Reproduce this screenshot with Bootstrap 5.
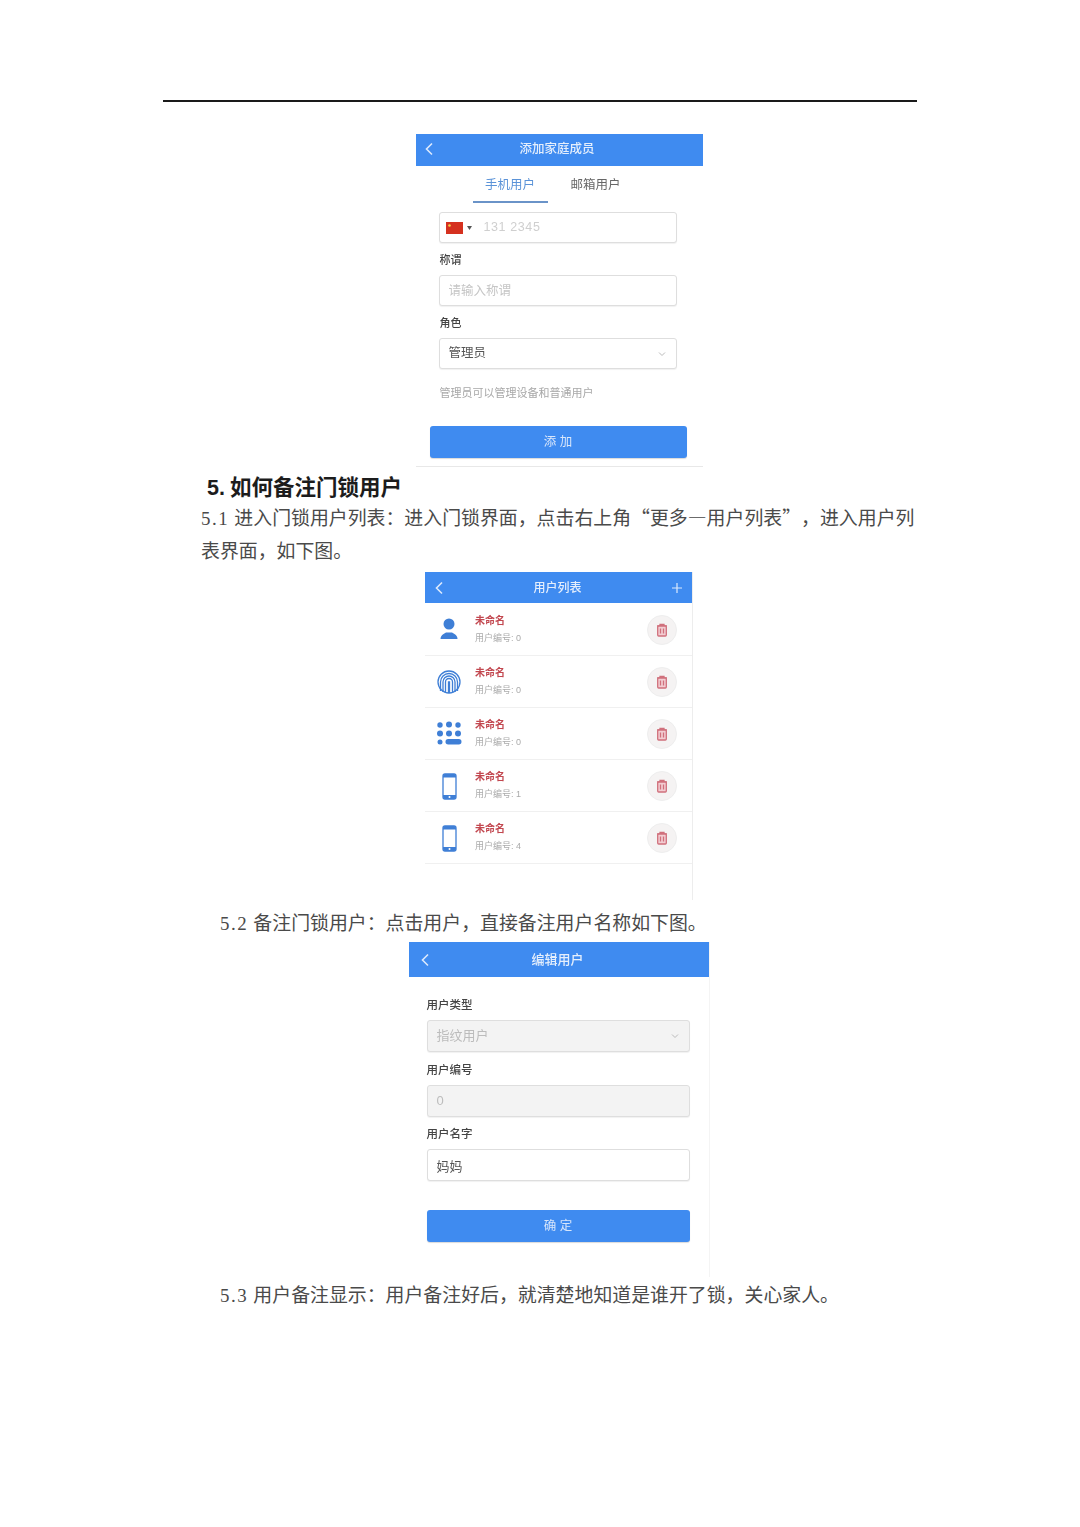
<!DOCTYPE html>
<html lang="zh-CN">
<head>
    <meta charset="UTF-8">
    <meta name="viewport" content="width=device-width, initial-scale=1.0">
    <title>如何备注门锁用户</title>
    <link href="https://cdn.jsdelivr.net/npm/bootstrap@5.3.0/dist/css/bootstrap.min.css" rel="stylesheet">
    <style>
        :root { --app-blue: #3f8bf0; }
        body { background: #fff; font-family: "Liberation Sans", "Noto Sans CJK SC", sans-serif; }
        .doc-page { width: 754px; margin-left: 163px; padding-top: 100px; height: 1527px; }
        .doc-rule { height: 2px; background: #1a1a1a; }
        .doc-body { padding-left: 38px; padding-right: 0; }
        .doc-text { font-family: "Noto Sans CJK SC", sans-serif; font-size: 18.9px; line-height: 33px; color: #4a4a4a; margin: 0; text-spacing-trim: space-all; white-space: nowrap; }
        .doc-num { font-family: "Liberation Serif", serif; letter-spacing: 1.5px; margin-right: 1px; line-height: 1; }
        .doc-title { font-family: "Liberation Sans", "Noto Sans CJK SC", sans-serif; font-size: 21.5px; line-height: 30px; font-weight: 700; color: #1c1c1c; margin: 0; padding-left: 6px; height: 33px; padding-top: 6px; word-spacing: -1px; }
        .doc-indent { padding-left: 19px; }

        .phone { background: #fff; filter: blur(.6px); }
        .phone-bar { background: var(--app-blue); color: #e4eefc; font-size: 12.5px; font-weight: 500; }
        .phone-bar svg { flex: none; }
        .bar-title { flex: 1; text-align: center; }
        .phone-label { font-size: 11px; line-height: 15px; color: #444; font-weight: 500; }
        .phone .form-control, .phone .form-select { font-size: 12.5px; height: 31px; min-height: 0; padding: 0 9px; border: 1px solid #dedede; border-radius: 3px; color: #555; box-shadow: 0 1px 1px rgba(0,0,0,.06); }
        .phone .form-control::placeholder { color: #c6c6c6; }
        .phone .form-select { background-image: url("data:image/svg+xml,%3csvg xmlns='http://www.w3.org/2000/svg' viewBox='0 0 16 16'%3e%3cpath fill='none' stroke='%23bbbbbb' stroke-width='2' d='m2 5 6 6 6-6'/%3e%3c/svg%3e"); background-size: 10px 8px; background-position: right 9px center; }
        .phone .form-select:disabled, .phone .form-control:disabled { background-color: #f3f3f3; color: #bcbcbc; opacity: 1; }
        .phone .btn-primary { background: var(--app-blue); border: 0; border-radius: 3px; height: 32px; padding: 0; font-size: 12.5px; color: #d8e6fb; box-shadow: 0 1px 1px rgba(0,0,0,.15); }

        .phone-add { width: 287px; height: 333px; border-bottom: 1px solid #e8e8e8; }
        .phone-add .phone-bar { height: 32px; padding: 0 22px 2px 8px; }
        .add-tabs { height: 37px; padding-left: 57px; font-size: 12.5px; color: #666; }
        .add-tab { width: 75px; text-align: center; line-height: 38px; height: 37px; }
        .add-tab.is-active { color: #5b93d8; border-bottom: 2px solid #6a93c8; }
        .add-tab + .add-tab { margin-left: 10px; width: 76px; }
        .add-form { padding: 9px 26px 0 23px; }
        .add-form .phone-label { margin: 10px 0 7px; padding-left: 1px; }
        .phone-field { gap: 4px; }
        .phone .phone-field { padding-left: 6px; }
        .phone-number { color: #cfcfcf; margin-left: 8px; letter-spacing: .6px; }
        .add-hint { font-size: 11px; color: #a8a8a8; line-height: 15px; margin-top: 17px; padding-left: 1px; }
        .add-submit { padding: 25px 16px 0 14px; }

        .phone-users { width: 268px; height: 328px; margin-top: 6px; margin-bottom: 5px; border-right: 1px solid #ededed; }
        .phone-users .phone-bar { height: 31px; padding: 0 9px; font-size: 12px; }
        .user-list { padding-top: 1px; }
        .user-row { height: 52px; border-bottom: 1px solid #f0f0f0; padding: 0 15px 0 11px; }
        .user-icon { width: 26px; height: 30px; margin-right: 13px; color: #3f7fd6; }
        .user-name { font-size: 10px; line-height: 13px; color: #c2474f; font-weight: 700; }
        .user-no { font-size: 9px; line-height: 13px; color: #aaa; margin-top: 5px; }
        .user-del { width: 30px; height: 30px; border-radius: 50%; background: #f5f3f3; border: 1px solid #eee; }

        .phone-edit { width: 301px; height: 335px; margin-top: 4px; border-right: 1px solid #f4f4f4; }
        .phone-edit .phone-bar { height: 35px; padding: 0 23px 0 11px; font-size: 13px; }
        .edit-form { padding: 21px 19px 0 18px; }
        .edit-form .phone-label { margin-bottom: 7px; font-size: 11.5px; }
        .edit-form .phone-label ~ .phone-label { margin-top: 10.5px; }
        .phone-edit .form-control, .phone-edit .form-select { font-size: 13px; height: 32px; }
        .edit-submit { margin-top: 29px; }
    </style>
</head>
<body>
    <div class="doc-page">
        <div class="doc-rule"></div>

        <div class="doc-body">
            <!-- Add family member -->
            <div class="phone phone-add mx-auto" style="margin-top: 32px">
                <div class="phone-bar d-flex align-items-center">
                    <svg width="10" height="14" viewBox="0 0 10 14" fill="none" stroke="#dce9fc" stroke-width="1.6"><path d="M8 1.500 2.500 7 8 12.500"/></svg>
                    <span class="bar-title">添加家庭成员</span>
                </div>
                <div class="add-tabs d-flex">
                    <div class="add-tab is-active">手机用户</div>
                    <div class="add-tab">邮箱用户</div>
                </div>
                <div class="add-form">
                    <div class="form-control d-flex align-items-center phone-field">
                        <svg width="17" height="12" viewBox="0 0 17 12"><rect width="17" height="12" fill="#d5311f"/><circle cx="3.500" cy="3.500" r="1.300" fill="#f4d24a"/></svg>
                        <svg width="5" height="4" viewBox="0 0 5 4"><path d="M0 0h5L2.500 4z" fill="#555"/></svg>
                        <span class="phone-number">131 2345</span>
                    </div>
                    <div class="phone-label">称谓</div>
                    <input class="form-control" type="text" placeholder="请输入称谓">
                    <div class="phone-label">角色</div>
                    <select class="form-select"><option>管理员</option></select>
                    <div class="add-hint">管理员可以管理设备和普通用户</div>
                </div>
                <div class="add-submit"><button class="btn btn-primary w-100" type="button">添 加</button></div>
            </div>

            <h2 class="doc-title">5. 如何备注门锁用户</h2>
            <p class="doc-text"><span class="doc-num">5.1</span> 进入门锁用户列表：进入门锁界面，点击右上角“更多—用户列表”，进入用户列</p>
            <p class="doc-text">表界面，如下图。</p>

            <!-- User list -->
            <div class="phone phone-users mx-auto">
                <div class="phone-bar d-flex align-items-center">
                    <svg width="10" height="14" viewBox="0 0 10 14" fill="none" stroke="#dce9fc" stroke-width="1.6"><path d="M8 1.500 2.500 7 8 12.500"/></svg>
                    <span class="bar-title">用户列表</span>
                    <svg width="12" height="12" viewBox="0 0 12 12" stroke="#dce9fc" stroke-width="1.200"><path d="M6 1v10M1 6h10"/></svg>
                </div>
                <div id="user-list" class="user-list"></div>
            </div>

            <p class="doc-text doc-indent"><span class="doc-num">5.2</span> 备注门锁用户：点击用户，直接备注用户名称如下图。</p>

            <!-- Edit user -->
            <div class="phone phone-edit mx-auto">
                <div class="phone-bar d-flex align-items-center">
                    <svg width="10" height="14" viewBox="0 0 10 14" fill="none" stroke="#dce9fc" stroke-width="1.6"><path d="M8 1.500 2.500 7 8 12.500"/></svg>
                    <span class="bar-title">编辑用户</span>
                </div>
                <div class="edit-form">
                    <div class="phone-label">用户类型</div>
                    <select class="form-select" disabled><option>指纹用户</option></select>
                    <div class="phone-label">用户编号</div>
                    <input class="form-control" type="text" value="0" disabled>
                    <div class="phone-label">用户名字</div>
                    <input class="form-control" type="text" value="妈妈">
                    <button class="btn btn-primary w-100 edit-submit" type="button">确 定</button>
                </div>
            </div>

            <p class="doc-text doc-indent"><span class="doc-num">5.3</span> 用户备注显示：用户备注好后，就清楚地知道是谁开了锁，关心家人。</p>
        </div>
    </div>

    <script>
        // icon shapes for the user rows
        const icons = {
            person: '<circle cx="13" cy="9" r="5.500" fill="currentColor"/><path d="M4.500 24c0-2 1-4 3-5l2.500-1.500h6l2.500 1.500c2 1 3 3 3 5z" fill="currentColor"/>',
            finger: '<g fill="none" stroke="currentColor" stroke-width="1.300">' +
                '<ellipse cx="13" cy="15" rx="11" ry="11"/><path d="M4.500 24V15a8.500 8.500 0 0 1 17 0v9"/><path d="M7 25V15a6 6 0 0 1 12 0v10"/>' +
                '<path d="M9.500 26V15a3.500 3.500 0 0 1 7 0v11"/><path d="M12.500 26V15h1v11"/></g>',
            keypad: '<g fill="currentColor"><circle cx="4" cy="6" r="2.700"/><circle cx="13" cy="5.500" r="3"/><circle cx="22" cy="6" r="2.700"/>' +
                '<circle cx="4" cy="14.500" r="3"/><circle cx="13" cy="14.500" r="3"/><circle cx="22" cy="14.500" r="3"/>' +
                '<circle cx="4" cy="23" r="2.500"/><rect x="9.500" y="20" width="16" height="5.500" rx="2.700"/></g>',
            mobile: '<rect x="7" y="3" width="13" height="25" rx="2" fill="none" stroke="currentColor" stroke-width="1.300"/>' +
                '<path d="M7 5a2 2 0 0 1 2-2h9a2 2 0 0 1 2 2v1.500H7zM7 24h13v2a2 2 0 0 1-2 2H9a2 2 0 0 1-2-2z" fill="currentColor"/>' +
                '<circle cx="13.500" cy="26" r="1" fill="#fff"/>'
        };
        const users = [
            ['person', 0], ['finger', 0], ['keypad', 0], ['mobile', 1], ['mobile', 4]
        ];
        const trash = '<svg width="12" height="14" viewBox="0 0 12 14" fill="#f3cdd2" stroke="#d0707c" stroke-width="1.300">' +
            '<path d="M1 3h10M4 3V1.500h4V3"/><rect x="1.700" y="3" width="8.600" height="10" rx="1"/><path d="M4.500 5.500v5M7.500 5.500v5"/></svg>';

        document.getElementById('user-list').innerHTML = users.map(([icon, no]) => `
            <div class="user-row d-flex align-items-center">
                <svg class="user-icon" viewBox="0 0 26 30">${icons[icon]}</svg>
                <div class="flex-grow-1">
                    <div class="user-name">未命名</div>
                    <div class="user-no">用户编号: ${no}</div>
                </div>
                <div class="user-del d-flex align-items-center justify-content-center">${trash}</div>
            </div>`).join('');
    </script>
    <script src="https://cdn.jsdelivr.net/npm/bootstrap@5.3.0/dist/js/bootstrap.bundle.min.js"></script>
</body>
</html>
